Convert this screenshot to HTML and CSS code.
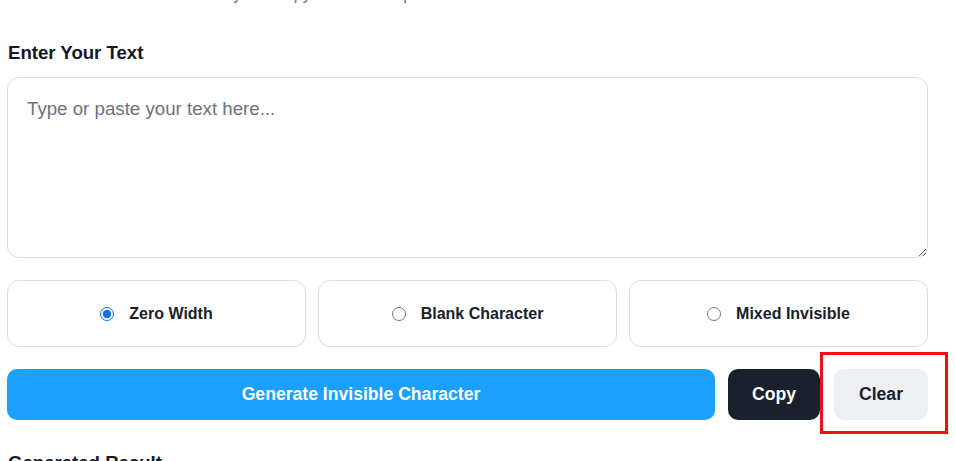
FILE: index.html
```html
<!DOCTYPE html>
<html lang="en">
    <head>
        <meta charset="utf-8">
        <title>Invisible Character Generator</title>
        <meta name="viewport" content="width=device-width">
        <link rel="stylesheet" href="styles.css">
    </head>
    <body>
        <div class="page">
            <p class="intro">Create hidden text easily and copy the text and paste it into the chat or name field in a second with no extra effort.</p>

            <h2 class="section-title">Enter Your Text</h2>
            <textarea class="text-input" placeholder="Type or paste your text here..."></textarea>

            <div class="modes">
                <label class="mode">
                    <input type="radio" name="mode" value="zero" checked>
                    <span>Zero Width</span>
                </label>
                <label class="mode">
                    <input type="radio" name="mode" value="blank">
                    <span>Blank Character</span>
                </label>
                <label class="mode">
                    <input type="radio" name="mode" value="mixed">
                    <span>Mixed Invisible</span>
                </label>
            </div>

            <div class="actions">
                <button class="btn btn-generate">Generate Invisible Character</button>
                <button class="btn btn-copy">Copy</button>
                <div class="clear-wrap">
                    <button class="btn btn-clear">Clear</button>
                    <span class="highlight"></span>
                </div>
            </div>

            <h2 class="section-title result-title">Generated Result</h2>
        </div>
    </body>
</html>
```

FILE: styles.css
```css
body {
    margin: 0;
    background: #fff;
    font-family: "Liberation Sans", Arial, sans-serif;
    color: #1a202c;
}

.page {
    width: 921px;
    padding: 0 7px;
}

.intro {
    margin: -17px 0 0;
    font-size: 16px;
    line-height: 24px;
    color: #6b7280;
    text-align: center;
    white-space: nowrap;
}

.section-title {
    margin: 35px 0 13px 1px;
    font-size: 18.6px;
    font-weight: bold;
    color: #111827;
}

.text-input {
    display: block;
    box-sizing: border-box;
    width: 100%;
    height: 181px;
    padding: 17px 19px;
    border: 1px solid #d9dce1;
    border-radius: 12px;
    font-family: "Liberation Sans", Arial, sans-serif;
    font-size: 18.7px;
    line-height: 1.5;
    color: #1f2937;
    outline: none;
}
.text-input::placeholder {
    color: #6b7280;
}

.modes {
    display: grid;
    grid-template-columns: repeat(3, 1fr);
    gap: 12px;
    margin-top: 22px;
}

.mode {
    display: flex;
    align-items: center;
    justify-content: center;
    gap: 15px;
    height: 67px;
    box-sizing: border-box;
    border: 1px solid #d9dce1;
    border-radius: 12px;
    font-size: 16px;
    font-weight: bold;
    color: #1a202c;
}
.mode input {
    width: 14px;
    height: 14px;
    margin: 0;
    accent-color: #0b6ff0;
}

.actions {
    display: flex;
    gap: 13px;
    margin-top: 22px;
}

.btn {
    height: 51px;
    border: none;
    border-radius: 10px;
    font-family: "Liberation Sans", Arial, sans-serif;
    font-size: 17.6px;
    font-weight: bold;
    cursor: pointer;
}
.btn-generate {
    flex: 1;
    background: #1c9ffd;
    color: #fff;
}
.btn-copy {
    width: 92px;
    background: #1a202c;
    color: #fff;
}
.btn-clear {
    width: 94px;
    background: #edf0f3;
    color: #1a202c;
}

.clear-wrap {
    position: relative;
    margin-left: 1px;
}
.highlight {
    position: absolute;
    left: -14px;
    top: -17px;
    right: -20px;
    bottom: -14px;
    border: 3px solid #ee1111;
    pointer-events: none;
}

.result-title {
    margin-top: 32px;
}
```
